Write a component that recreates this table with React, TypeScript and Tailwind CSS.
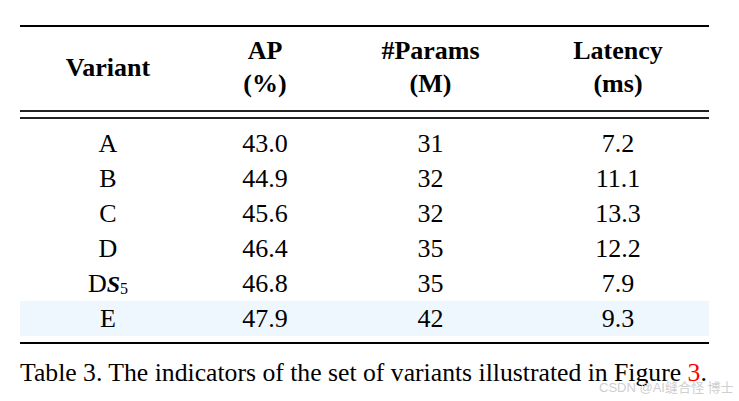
const rows = [
	{ v: "A", ap: "43.0", p: "31", l: "7.2" },
	{ v: "B", ap: "44.9", p: "32", l: "11.1" },
	{ v: "C", ap: "45.6", p: "32", l: "13.3" },
	{ v: "D", ap: "46.4", p: "35", l: "12.2" },
	{ v: "DS", ap: "46.8", p: "35", l: "7.9" },
	{ v: "E", ap: "47.9", p: "42", l: "9.3", hl: true },
];

const cols = "grid grid-cols-[176px_138px_193px_182px]";

const VariantName = ({ v }: { v: string }) =>
	v === "DS" ? (
		<span>
			D
			<span className="font-bold italic text-[24px]">S</span>
			<sub className="text-[16px] relative top-[2px]">5</sub>
		</span>
	) : (
		<span>{v}</span>
	);

export default function App() {
	return (
		<div className="w-[739px] h-[401px] bg-white text-black font-['Liberation_Serif',serif] relative overflow-hidden">
			<div className="pl-5 pt-[25px]">
				<div className="w-[689px]">
					<div className="h-[2px] bg-black" />
					<div className={`${cols} font-bold text-[26px] leading-[33px] pt-[7px] pb-[10px] text-center`}>
						<div className="flex items-center justify-center">Variant</div>
						<div>
							AP
							<br />
							(%)
						</div>
						<div>
							#Params
							<br />
							(M)
						</div>
						<div>
							Latency
							<br />
							(ms)
						</div>
					</div>
					<div className="h-[1.5px] bg-[#222]" />
					<div className="h-[5.5px]" />
					<div className="h-[1.5px] bg-[#222]" />
					<div className="pt-[7px] pb-[6px]">
						{rows.map((r) => (
							<div
								key={r.v}
								className={`${cols} h-[35px] items-center text-center text-[26px] leading-[35px] ${r.hl ? "bg-[#eef6fe]" : ""}`}
							>
								<div>
									<VariantName v={r.v} />
								</div>
								<div>{r.ap}</div>
								<div>{r.p}</div>
								<div>{r.l}</div>
							</div>
						))}
					</div>
					<div className="h-[2px] bg-black" />
				</div>
				<p className="mt-[14px] text-[25.7px] leading-[30px] whitespace-nowrap">
					Table 3. The indicators of the set of variants illustrated in Figure{" "}
					<span className="text-[#ff0000]">3</span>.
				</p>
			</div>
			<div className="absolute left-[599px] top-[380px] text-[13px] leading-[16px] text-[#cfcfcf] font-['Liberation_Sans','Noto_Sans_CJK_SC',sans-serif] whitespace-nowrap">
				CSDN @AI缝合怪 博士
			</div>
		</div>
	);
}
